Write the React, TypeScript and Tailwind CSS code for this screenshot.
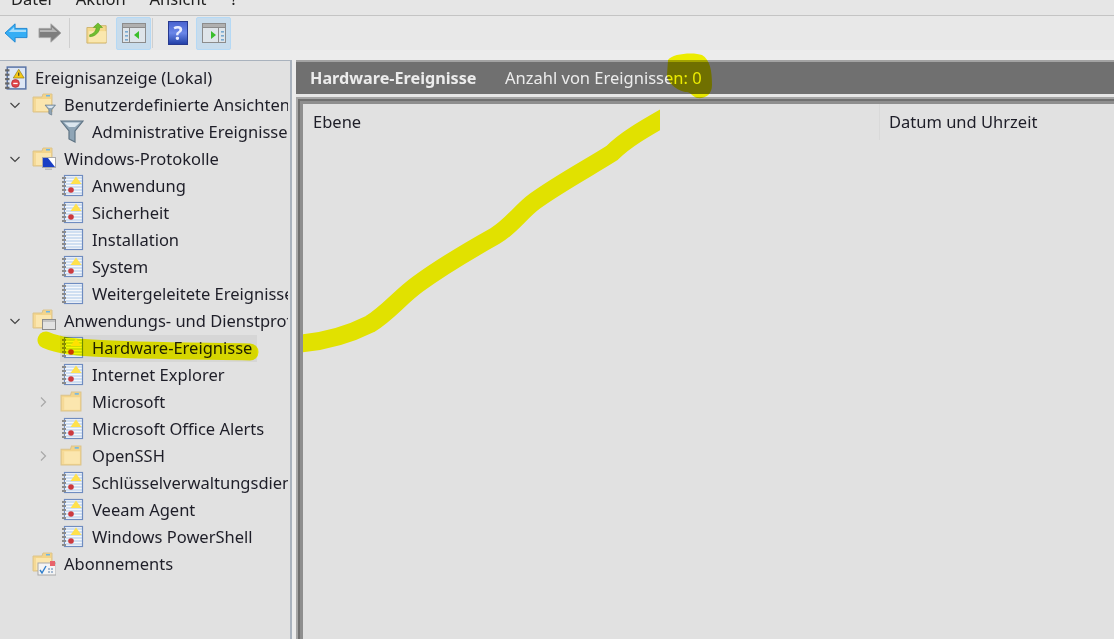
import { ReactNode } from "react";

const font = { fontFamily: '"Noto Sans", "Open Sans", sans-serif' };

function Chevron({ open }: { open?: boolean }) {
  return (
    <svg width="14" height="14" viewBox="0 0 14 14" fill="none" stroke={open ? "#444" : "#a8a8a8"} strokeWidth="1.2">
      {open ? <path d="M2.5 5 L7 9.5 L11.5 5" /> : <path d="M5 2.5 L9.5 7 L5 11.5" />}
    </svg>
  );
}

function FolderShape() {
  return (
    <>
      <path d="M1 4 H10 L11 1 H20 V19 H1 Z" fill="#f3d48a" stroke="#dcc48c" strokeWidth="1" />
      <rect x="14" y="2" width="4" height="1.5" fill="#6db6e8" />
      <path d="M2 6 H19 V18 H2 Z" fill="#fbe6ae" />
      <path d="M2 6 H4 V18 H2 Z" fill="#f5d996" />
    </>
  );
}

function FolderIcon() {
  return (
    <svg width="22" height="22" viewBox="0 0 21 21">
      <FolderShape />
    </svg>
  );
}

function FilterShape({ x, y, s }: { x: number; y: number; s: number }) {
  return (
    <g transform={`translate(${x} ${y}) scale(${s})`}>
      <path d="M0 0 H22 L14 10 V21 L8 18 V10 Z" fill="#8fa5b6" stroke="#5f7484" strokeWidth="1.2" />
      <path d="M3 1.5 H19 L14 6 H8 Z" fill="#dbe6ee" />
    </g>
  );
}

function LogIcon({ plain }: { plain?: boolean }) {
  return (
    <svg width="24" height="24" viewBox="0 0 24 24">
      <rect x="4.5" y="1.5" width="18" height="20" fill="#f6f8fb" stroke="#6f8cc0" strokeWidth="1.2" />
      {[1, 2, 3, 4, 5, 6].map((i) => (
        <path key={i} d={`M6 ${i * 3 + 1} H22`} stroke="#a9c6e8" strokeWidth="1" />
      ))}
      {[3, 7, 11, 15, 19].map((y) => (
        <rect key={y} x="2" y={y} width="4" height="2" fill="#8a8a8a" />
      ))}
      {!plain && (
        <>
          <path d="M16 2.5 L21.5 10 H10.5 Z" fill="#ffe14d" />
          <circle cx="11" cy="16" r="2.8" fill="#cc3a3f" />
        </>
      )}
    </svg>
  );
}

function RootIcon() {
  return (
    <svg width="24" height="24" viewBox="0 0 22 22">
      <rect x="3" y="1" width="17" height="20" fill="#dde6f4" stroke="#5c76a8" strokeWidth="1.4" />
      {[3, 7, 11, 15, 19].map((y) => (
        <rect key={y} x="1" y={y} width="4" height="2" fill="#666" />
      ))}
      <path d="M13.5 3 L18.5 11 H8.5 Z" fill="#f6c915" stroke="#8a7414" strokeWidth="0.6" />
      <rect x="13" y="6" width="1" height="3" fill="#333" />
      <circle cx="10.5" cy="16" r="3.6" fill="#e0444a" stroke="#a82a2e" strokeWidth="0.6" />
      <rect x="8.5" y="15.4" width="4" height="1.2" fill="#fff" />
    </svg>
  );
}

function FilterFolder() {
  return (
    <svg width="24" height="24" viewBox="0 0 24 24">
      <FolderShape />
      <FilterShape x={13} y={12} s={0.48} />
    </svg>
  );
}

function MonitorFolder() {
  return (
    <svg width="24" height="24" viewBox="0 0 24 24">
      <FolderShape />
      <rect x="10.5" y="10.5" width="13" height="10" fill="#fff" stroke="#aaa" />
      <path d="M11 20 V11 H16 L23 20 Z" fill="#1a3fc4" />
      <rect x="13" y="21.5" width="7" height="1.5" fill="#bbb" />
    </svg>
  );
}

function WindowFolder() {
  return (
    <svg width="24" height="24" viewBox="0 0 24 24">
      <FolderShape />
      <rect x="10.5" y="10.5" width="13" height="10" fill="#e2e2e2" stroke="#8c8c8c" />
      <rect x="11" y="11" width="12" height="2" fill="#c4c4c4" />
    </svg>
  );
}

function SubscriptionFolder() {
  return (
    <svg width="24" height="24" viewBox="0 0 24 24">
      <FolderShape />
      <rect x="6" y="11" width="18" height="12" fill="#f4f4f4" stroke="#a8a8a8" />
      <rect x="18" y="9" width="5" height="5" fill="#e8636a" />
      <path d="M8 18 L10 21 L14 14" fill="none" stroke="#2f7ecb" strokeWidth="1.4" />
      <path d="M16 17 H22 M16 20 H22" stroke="#8ba6c6" strokeWidth="1.4" strokeDasharray="2 1" />
    </svg>
  );
}

function FilterIcon() {
  return (
    <svg width="24" height="24" viewBox="0 0 24 24">
      <FilterShape x={1} y={1} s={1} />
    </svg>
  );
}

function BackArrow() {
  return (
    <svg className="shrink-0" width="24" height="22" viewBox="0 0 26 24">
      <path d="M1 12 L12 2 V7 H25 V17 H12 V22 Z" fill="#35aef5" stroke="#1c84d0" strokeWidth="1" />
      <path d="M5 11 L11 5.5 V8.5 H24 V11 Z" fill="#a5dcfb" />
    </svg>
  );
}

function ForwardArrow() {
  return (
    <svg className="shrink-0" width="24" height="22" viewBox="0 0 26 24">
      <path d="M25 12 L14 2 V7 H1 V17 H14 V22 Z" fill="#7e7e7e" stroke="#a5a5a5" strokeWidth="1" />
      <path d="M2 8.5 H15 V5.5 L21 11 H2 Z" fill="#b5b5b5" />
    </svg>
  );
}

function FolderUp() {
  return (
    <svg className="shrink-0" width="22" height="22" viewBox="0 0 24 24">
      <path d="M1 6 H8 L10 4 H22 V23 H1 Z" fill="#f5d98c" stroke="#cdb26c" />
      <path d="M3 10 H22 V22 H3 Z" fill="#fae7ae" />
      <path d="M4 14 C8 13 11 10 11 6 H8 L13 1 L18 6 H15 C15 11 10 16 4 16 Z" fill="#6fbe2e" stroke="#4f9a1c" strokeWidth="0.6" />
    </svg>
  );
}

function PaneIcon({ right }: { right?: boolean }) {
  return (
    <svg width="24" height="20" viewBox="0 0 24 20">
      <rect x="0.5" y="0.5" width="23" height="19" fill="#dfe5ea" stroke="#8c8c8c" />
      <rect x="1" y="1" width="22" height="3" fill="#b0b0b0" />
      <path d={right ? "M16.5 5 V19 M1 4.5 H23" : "M7.5 5 V19 M1 4.5 H23"} stroke="#8c8c8c" fill="none" />
      {[8, 12, 16].map((y) => (
        <rect key={y} x={right ? 19 : 3} y={y} width="3" height="1.6" fill="#7aa9d0" />
      ))}
      {right ? <path d="M9 8 L14 12 L9 16 Z" fill="#3bbf2c" /> : <path d="M17 8 L12 12 L17 16 Z" fill="#3bbf2c" />}
    </svg>
  );
}

function HelpIcon() {
  return (
    <div className="flex h-[24px] w-[20px] shrink-0 items-center justify-center border border-[#27398f] bg-gradient-to-b from-[#4a63d0] via-[#6a86e8] to-[#2340a8] text-[19px] leading-none font-bold text-[#e8ecff]">
      ?
    </div>
  );
}

function ToolButton({ className, children }: { className?: string; children: ReactNode }) {
  return (
    <div className={`flex h-[33px] w-[35px] shrink-0 items-center justify-center rounded-[2px] border border-[#b5d9f5] bg-[#c8dcec] ${className ?? ""}`}>
      {children}
    </div>
  );
}

function TreeRow({
  depth,
  open,
  arrow,
  selected,
  icon,
  label,
}: {
  depth: 1 | 2;
  open?: boolean;
  arrow?: boolean;
  selected?: boolean;
  icon: ReactNode;
  label: string;
}) {
  return (
    <div className={`flex h-[27px] items-center whitespace-nowrap ${depth === 1 ? "pl-[8px]" : "pl-[36px]"}`}>
      <div className="flex w-[24px] shrink-0 items-center">{arrow && <Chevron open={open} />}</div>
      <div className={`flex h-full shrink-0 items-center ${selected ? "bg-[#d6d6d6] pr-[5px]" : ""}`}>
        <div className="flex w-[32px] shrink-0 items-center">{icon}</div>
        <span>{label}</span>
      </div>
    </div>
  );
}

function Yellow() {
  return (
    <svg className="pointer-events-none absolute top-0 left-0 mix-blend-multiply" width="1114" height="639" viewBox="0 0 1114 639" fill="none">
      <defs>
        <clipPath id="stroke-clip">
          <rect x="303" y="0" width="357" height="639" />
        </clipPath>
      </defs>
      <path
        clipPath="url(#stroke-clip)"
        d="M290 344 C325 343 350 334 370 324 C388 313 400 297 418 284 C440 268 470 250 495 236 C512 226 520 212 535 201 C560 183 590 167 612 153 C625 140 642 130 672 113"
        stroke="#ffff00"
        strokeWidth="18"
      />
      <path d="M46 340 C60 346 75 347 92 348 C140 351 200 351 250 352" stroke="#ffff00" strokeWidth="17" strokeLinecap="round" />
      <path d="M668 60 C672 53 695 52 702 55 C710 60 712 70 712 85 C712 95 705 99 697 98 C692 96 690 92 687 92 C680 92 668 85 667 75 Z" fill="#ffff00" />
    </svg>
  );
}

export default function App() {
  return (
    <div className="relative h-[639px] w-[1114px] overflow-hidden bg-[#e6e6e6] text-[16.5px] text-[#1e1e28]" style={font}>
      <div className="flex h-[16px] items-end gap-[24px] overflow-hidden border-b border-[#c4c4c4] pl-[11px] text-[16.5px] leading-[22px] text-[#222]">
        <span className="mb-[5px]">Datei</span>
        <span className="mb-[5px]">Aktion</span>
        <span className="mb-[5px]">Ansicht</span>
        <span className="mb-[5px]">?</span>
      </div>

      <div className="flex h-[34px] items-center bg-[#e8e8e8] pl-[4px]">
        <BackArrow />
        <div className="ml-[10px] flex shrink-0">
          <ForwardArrow />
        </div>
        <div className="mr-[16px] ml-[7px] h-[30px] w-px shrink-0 bg-[#cfcfcf]" />
        <FolderUp />
        <ToolButton className="ml-[8px]">
          <PaneIcon />
        </ToolButton>
        <div className="mr-[15px] ml-[1px] h-[30px] w-px shrink-0 bg-[#cfcfcf]" />
        <HelpIcon />
        <ToolButton className="ml-[8px]">
          <PaneIcon right />
        </ToolButton>
      </div>

      <div className="flex h-[589px] bg-[#ececec] pt-[10px]">
        <div className="h-full w-[292px] shrink-0 overflow-hidden border-t border-r-2 border-[#a9b2bd] bg-[#e1e1e1] pr-[2px]">
          <div className="overflow-hidden pt-[3.5px]">
            <div className="flex h-[27px] items-center pl-[4px] whitespace-nowrap">
              <div className="flex w-[31px] shrink-0 items-center">
                <RootIcon />
              </div>
              <span>Ereignisanzeige (Lokal)</span>
            </div>
            <TreeRow depth={1} arrow open icon={<FilterFolder />} label="Benutzerdefinierte Ansichten" />
            <TreeRow depth={2} icon={<FilterIcon />} label="Administrative Ereignisse" />
            <TreeRow depth={1} arrow open icon={<MonitorFolder />} label="Windows-Protokolle" />
            <TreeRow depth={2} icon={<LogIcon />} label="Anwendung" />
            <TreeRow depth={2} icon={<LogIcon />} label="Sicherheit" />
            <TreeRow depth={2} icon={<LogIcon plain />} label="Installation" />
            <TreeRow depth={2} icon={<LogIcon />} label="System" />
            <TreeRow depth={2} icon={<LogIcon plain />} label="Weitergeleitete Ereignisse" />
            <TreeRow depth={1} arrow open icon={<WindowFolder />} label="Anwendungs- und Dienstprotokolle" />
            <TreeRow depth={2} selected icon={<LogIcon />} label="Hardware-Ereignisse" />
            <TreeRow depth={2} icon={<LogIcon />} label="Internet Explorer" />
            <TreeRow depth={2} arrow icon={<FolderIcon />} label="Microsoft" />
            <TreeRow depth={2} icon={<LogIcon />} label="Microsoft Office Alerts" />
            <TreeRow depth={2} arrow icon={<FolderIcon />} label="OpenSSH" />
            <TreeRow depth={2} icon={<LogIcon />} label="Schlüsselverwaltungsdienst" />
            <TreeRow depth={2} icon={<LogIcon />} label="Veeam Agent" />
            <TreeRow depth={2} icon={<LogIcon />} label="Windows PowerShell" />
            <TreeRow depth={1} icon={<SubscriptionFolder />} label="Abonnements" />
          </div>
        </div>

        <div className="ml-[4px] flex min-w-0 flex-1 flex-col">
          <div className="flex h-[34px] shrink-0 items-center border-t-2 border-[#a3a3a3] bg-[#707070] pt-[1px] pl-[14px] text-[#ececec]">
            <span className="w-[195px] text-[16.2px] font-bold">Hardware-Ereignisse</span>
            <span>Anzahl von Ereignissen: 0</span>
          </div>
          <div className="h-[3px] shrink-0 bg-[#e6e6e6]" />
          <div className="flex-1 border-t-2 border-l-2 border-[#a6a6a6]">
            <div className="h-full border-t-2 border-l-2 border-[#707070]">
              <div className="h-full border-t-[3px] border-l-[3px] border-[#8e8e8e] bg-[#e1e1e1]">
                <div className="flex h-[36px] items-center pl-[10px]">
                  <span className="w-[566px]">Ebene</span>
                  <div className="mr-[9px] h-full w-px bg-[#d9d9d9]" />
                  <span>Datum und Uhrzeit</span>
                </div>
              </div>
            </div>
          </div>
        </div>
      </div>

      <Yellow />
    </div>
  );
}
